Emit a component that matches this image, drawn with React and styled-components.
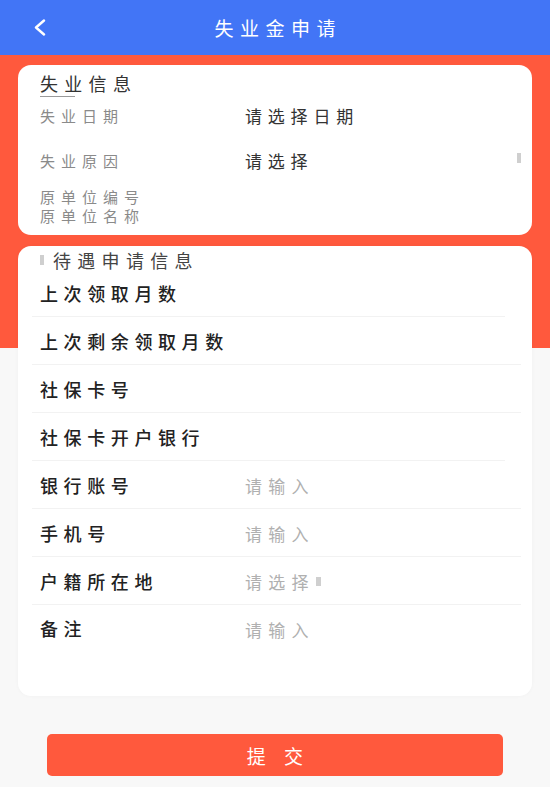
import React from "react";
import styled, { createGlobalStyle } from "styled-components";

const GlobalStyle = createGlobalStyle`
  * {
    box-sizing: border-box;
  }
  body {
    margin: 0;
    font-family: "Noto Sans CJK SC", "Noto Sans", sans-serif;
    background: linear-gradient(#ff593d 0, #ff593d 348px, #f8f8f8 348px);
    min-height: 787px;
  }
`;

const benefitRows = [
  { label: "上次领取月数", short: true },
  { label: "上次剩余领取月数" },
  { label: "社保卡号" },
  { label: "社保卡开户银行", short: true },
  { label: "银行账号", placeholder: "请输入" },
  { label: "手机号", placeholder: "请输入" },
  { label: "户籍所在地", placeholder: "请选择", mark: true },
];

const App = () => {
  return (
    <>
      <GlobalStyle />
      <Header>
        <Back>
          <svg width="17" height="17" viewBox="0 0 17 17" fill="none">
            <polyline
              points="12,1.5 4,8.5 12,15.5"
              stroke="#fff"
              strokeWidth="2.4"
              strokeLinecap="round"
              strokeLinejoin="round"
            />
          </svg>
        </Back>
        <Title>失业金申请</Title>
        <span />
      </Header>

      <Main>
        <InfoCard>
          <CardTitle>
            <TitleMark>失业</TitleMark>信息
          </CardTitle>
          <Field>
            <FieldLabel>失业日期</FieldLabel>
            <FieldValue>请选择日期</FieldValue>
          </Field>
          <Field>
            <FieldLabel>失业原因</FieldLabel>
            <FieldValue>请选择</FieldValue>
            <ScrollMark />
          </Field>
          <StackLabels>
            <div>原单位编号</div>
            <div>原单位名称</div>
          </StackLabels>
        </InfoCard>

        <FormCard>
          <Heading>
            <HeadingBar />
            待遇申请信息
          </Heading>
          {benefitRows.map((row) => (
            <Row key={row.label} $short={row.short}>
              <RowLabel>{row.label}</RowLabel>
              {row.placeholder && (
                <Placeholder>
                  {row.placeholder}
                  {row.mark && <InlineMark />}
                </Placeholder>
              )}
            </Row>
          ))}
          <RemarkRow>
            <RowLabel>备注</RowLabel>
            <Placeholder>请输入</Placeholder>
          </RemarkRow>
        </FormCard>

        <Submit>提 交</Submit>
      </Main>
    </>
  );
};

const Header = styled.div`
  height: 55px;
  background-color: #4275f6;
  display: grid;
  grid-template-columns: 1fr auto 1fr;
  align-items: center;
`;

const Back = styled.div`
  padding-left: 32px;
  display: flex;
  align-items: center;
  svg {
    display: block;
  }
`;

const Title = styled.div`
  color: #fff;
  font-size: 19px;
  letter-spacing: 6.5px;
  padding-left: 6.5px;
  line-height: 24px;
`;

const Main = styled.div`
  padding: 10px 18px 10px;
`;

const InfoCard = styled.div`
  background-color: #fff;
  border-radius: 13px;
  padding: 8px 11px 10px 22px;
`;

const CardTitle = styled.div`
  font-size: 18px;
  line-height: 20px;
  height: 20px;
  letter-spacing: 6.3px;
  color: #333;
`;

const TitleMark = styled.span`
  background: linear-gradient(#9a9a9a, #9a9a9a) left bottom / 35px 1px
    no-repeat;
  padding-bottom: 1px;
`;

const Field = styled.div`
  display: grid;
  grid-template-columns: 205px 1fr auto;
  align-items: center;
  height: 45px;
`;

const FieldLabel = styled.div`
  font-size: 15px;
  letter-spacing: 6px;
  color: #8a8a8a;
`;

const FieldValue = styled.div`
  font-size: 17px;
  letter-spacing: 5.8px;
  color: #333;
`;

const ScrollMark = styled.div`
  width: 4px;
  height: 10px;
  background-color: #cfcfcf;
  margin-top: -6px;
`;

const StackLabels = styled.div`
  margin-top: 4px;
  font-size: 15px;
  line-height: 19px;
  letter-spacing: 6px;
  color: #8a8a8a;
`;

const FormCard = styled.div`
  margin-top: 11px;
  background-color: #fff;
  border-radius: 13px;
  padding: 5px 11px 0 14px;
  height: 450px;
  box-shadow: 0 0 4px rgba(0, 0, 0, 0.03);
`;

const Heading = styled.div`
  display: flex;
  align-items: center;
  gap: 9px;
  padding-left: 8px;
  height: 18px;
  font-size: 18px;
  letter-spacing: 6.3px;
  color: #444;
`;

const HeadingBar = styled.span`
  width: 4px;
  height: 10px;
  background-color: #cfcfcf;
`;

const Row = styled.div`
  display: grid;
  grid-template-columns: 205px 1fr;
  align-items: center;
  height: 48px;
  padding-left: 8px;
  margin-right: ${(p) => (p.$short ? "16px" : "0")};
  border-bottom: 1px solid #f2f2f2;
`;

const RowLabel = styled.div`
  font-size: 18px;
  font-weight: 500;
  letter-spacing: 5.6px;
  color: #222;
`;

const Placeholder = styled.div`
  display: flex;
  align-items: center;
  font-size: 17px;
  letter-spacing: 6.3px;
  color: #b0b0b0;
  padding-top: 2px;
`;

const InlineMark = styled.span`
  width: 5px;
  height: 9px;
  background-color: #cfcfcf;
  margin-left: 1px;
`;

const RemarkRow = styled.div`
  display: grid;
  grid-template-columns: 205px 1fr;
  align-items: start;
  padding: 12px 0 0 8px;
  line-height: 22px;
`;

const Submit = styled.button`
  display: block;
  width: calc(100% - 58px);
  margin: 38px auto 0;
  height: 42px;
  border: none;
  border-radius: 5px;
  background-color: #ff593d;
  color: #fff;
  font-family: "Noto Sans CJK SC", "Noto Sans", sans-serif;
  font-size: 19px;
  letter-spacing: 7px;
  padding: 0 0 0 7px;
`;

export default App;
